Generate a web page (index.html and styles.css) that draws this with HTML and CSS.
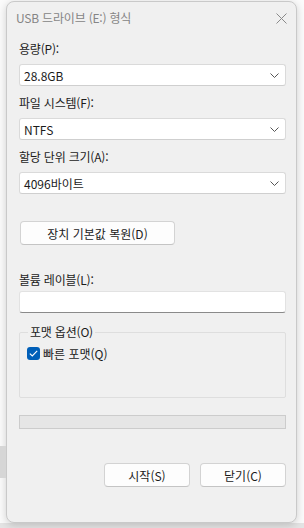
FILE: index.html
```html
<!DOCTYPE html>
<html lang="ko">
<head>
  <meta charset="UTF-8" />
  <meta name="viewport" content="width=device-width, initial-scale=1" />
  <title>USB 드라이브 (E:) 형식</title>
  <link rel="stylesheet" href="styles.css">
</head>
<body>

  <div class="backdrop">
    <div class="edge edge-left">
      <span class="bg-sel"></span>
    </div>

    <div class="dialog">
      <div class="titlebar">
        <span class="title">USB 드라이브 (E:) 형식</span>
        <svg class="close" width="11" height="11" viewBox="0 0 11 11">
          <path d="M0.5 0.5 L10.5 10.5 M10.5 0.5 L0.5 10.5" stroke="#8a8a8a" stroke-width="1" fill="none" />
        </svg>
      </div>

      <div class="content">
        <label class="lbl first">용량(P):</label>
        <div class="select">
          <span>28.8GB</span>
          <svg class="chev" width="9" height="5" viewBox="0 0 9 5"><path d="M0.5 0.5 L4.5 4.5 L8.5 0.5" stroke="#555" fill="none" /></svg>
        </div>

        <label class="lbl">파일 시스템(F):</label>
        <div class="select">
          <span>NTFS</span>
          <svg class="chev" width="9" height="5" viewBox="0 0 9 5"><path d="M0.5 0.5 L4.5 4.5 L8.5 0.5" stroke="#555" fill="none" /></svg>
        </div>

        <label class="lbl">할당 단위 크기(A):</label>
        <div class="select">
          <span>4096바이트</span>
          <svg class="chev" width="9" height="5" viewBox="0 0 9 5"><path d="M0.5 0.5 L4.5 4.5 L8.5 0.5" stroke="#555" fill="none" /></svg>
        </div>

        <button type="button" class="btn restore">장치 기본값 복원(D)</button>

        <label class="lbl volume">볼륨 레이블(L):</label>
        <div class="textbox"></div>

        <fieldset class="group">
          <legend>포맷 옵션(O)</legend>
          <div class="check-row">
            <span class="check">
              <svg width="9" height="7" viewBox="0 0 9 7"><path d="M0.8 3.6 L3.3 6 L8.2 0.9" stroke="#fff" stroke-width="1.1" fill="none" /></svg>
            </span>
            <span>빠른 포맷(Q)</span>
          </div>
        </fieldset>

        <div class="progress"></div>

        <div class="actions">
          <button type="button" class="btn">시작(S)</button>
          <button type="button" class="btn">닫기(C)</button>
        </div>
      </div>
    </div>
  </div>

</body>
</html>
```

FILE: styles.css
```css
* { box-sizing: border-box; }

body {
  margin: 0;
  padding: 0;
  overflow: hidden;
  font-family: 'Noto Sans CJK KR', 'Noto Sans', sans-serif;
  font-size: 12px;
  color: #1b1b1b;
  background: #fbfbfb;
  width: 304px;
  height: 528px;
}

.backdrop {
  position: relative;
  height: 528px;
  display: flex;
  align-items: flex-start;
  border-bottom: 5px solid #e4e4e4;
}

.edge-left {
  width: 6px;
  height: 100%;
  position: relative;
}

.bg-sel {
  position: absolute;
  left: 0;
  top: 446px;
  width: 6px;
  height: 32px;
  background: #d6d6d6;
}

.dialog {
  margin-top: 1px;
  width: 291px;
  height: 522px;
  background: #f0f0f0;
  border: 1px solid #c9c9c9;
  border-radius: 8px;
  box-shadow: 0 2px 8px rgba(0, 0, 0, 0.18);
}

.titlebar {
  height: 31px;
  display: flex;
  align-items: center;
  justify-content: space-between;
  padding: 0 9px 0 9px;
}

.title {
  color: #858585;
  font-size: 12px;
  letter-spacing: -0.2px;
}

.close {
  margin-top: 1px;
}

.content {
  display: flex;
  flex-direction: column;
  padding: 0 10px 0 12px;
}

.lbl {
  display: block;
  height: 16px;
  line-height: 16px;
  margin-top: 9px;
  margin-bottom: 7px;
  letter-spacing: -0.2px;
}

.lbl.first {
  margin-top: 8px;
}

.select {
  height: 22px;
  background: #ffffff;
  border: 1px solid #dadada;
  border-bottom-color: #cfcfcf;
  border-radius: 3px;
  display: flex;
  align-items: center;
  justify-content: space-between;
  padding: 0 6px 0 4px;
}

.btn {
  font-family: inherit;
  font-size: 12px;
  color: #1b1b1b;
  height: 24px;
  background: #fdfdfd;
  border: 1px solid #d3d3d3;
  border-bottom-color: #c4c4c4;
  border-radius: 4px;
  padding: 0;
  cursor: pointer;
}

.restore {
  width: 155px;
  margin-top: 27px;
  margin-left: 1px;
  align-self: flex-start;
}

.lbl.volume {
  margin-top: 27px;
  margin-bottom: 3px;
}

.textbox {
  height: 22px;
  background: #ffffff;
  border: 1px solid #e2e2e2;
  border-bottom: 1px solid #8a8a8a;
  border-radius: 3px;
}

.group {
  margin: 12px 0 0 0;
  padding: 6px 7px 0 7px;
  height: 73px;
  border: 1px solid #dedede;
  border-radius: 2px;
}

.group legend {
  padding: 0 2px;
  margin-left: 1px;
  line-height: 14px;
  letter-spacing: -0.2px;
}

.check-row {
  display: flex;
  align-items: center;
  gap: 3px;
}

.check {
  width: 13px;
  height: 13px;
  border-radius: 3px;
  background: #005fb8;
  display: flex;
  align-items: center;
  justify-content: center;
}

.progress {
  margin-top: 17px;
  height: 14px;
  background: #e6e6e6;
  border: 1px solid #cccccc;
}

.actions {
  display: flex;
  justify-content: flex-end;
  gap: 10px;
  margin-top: 34px;
}

.actions .btn {
  width: 86px;
}
```
